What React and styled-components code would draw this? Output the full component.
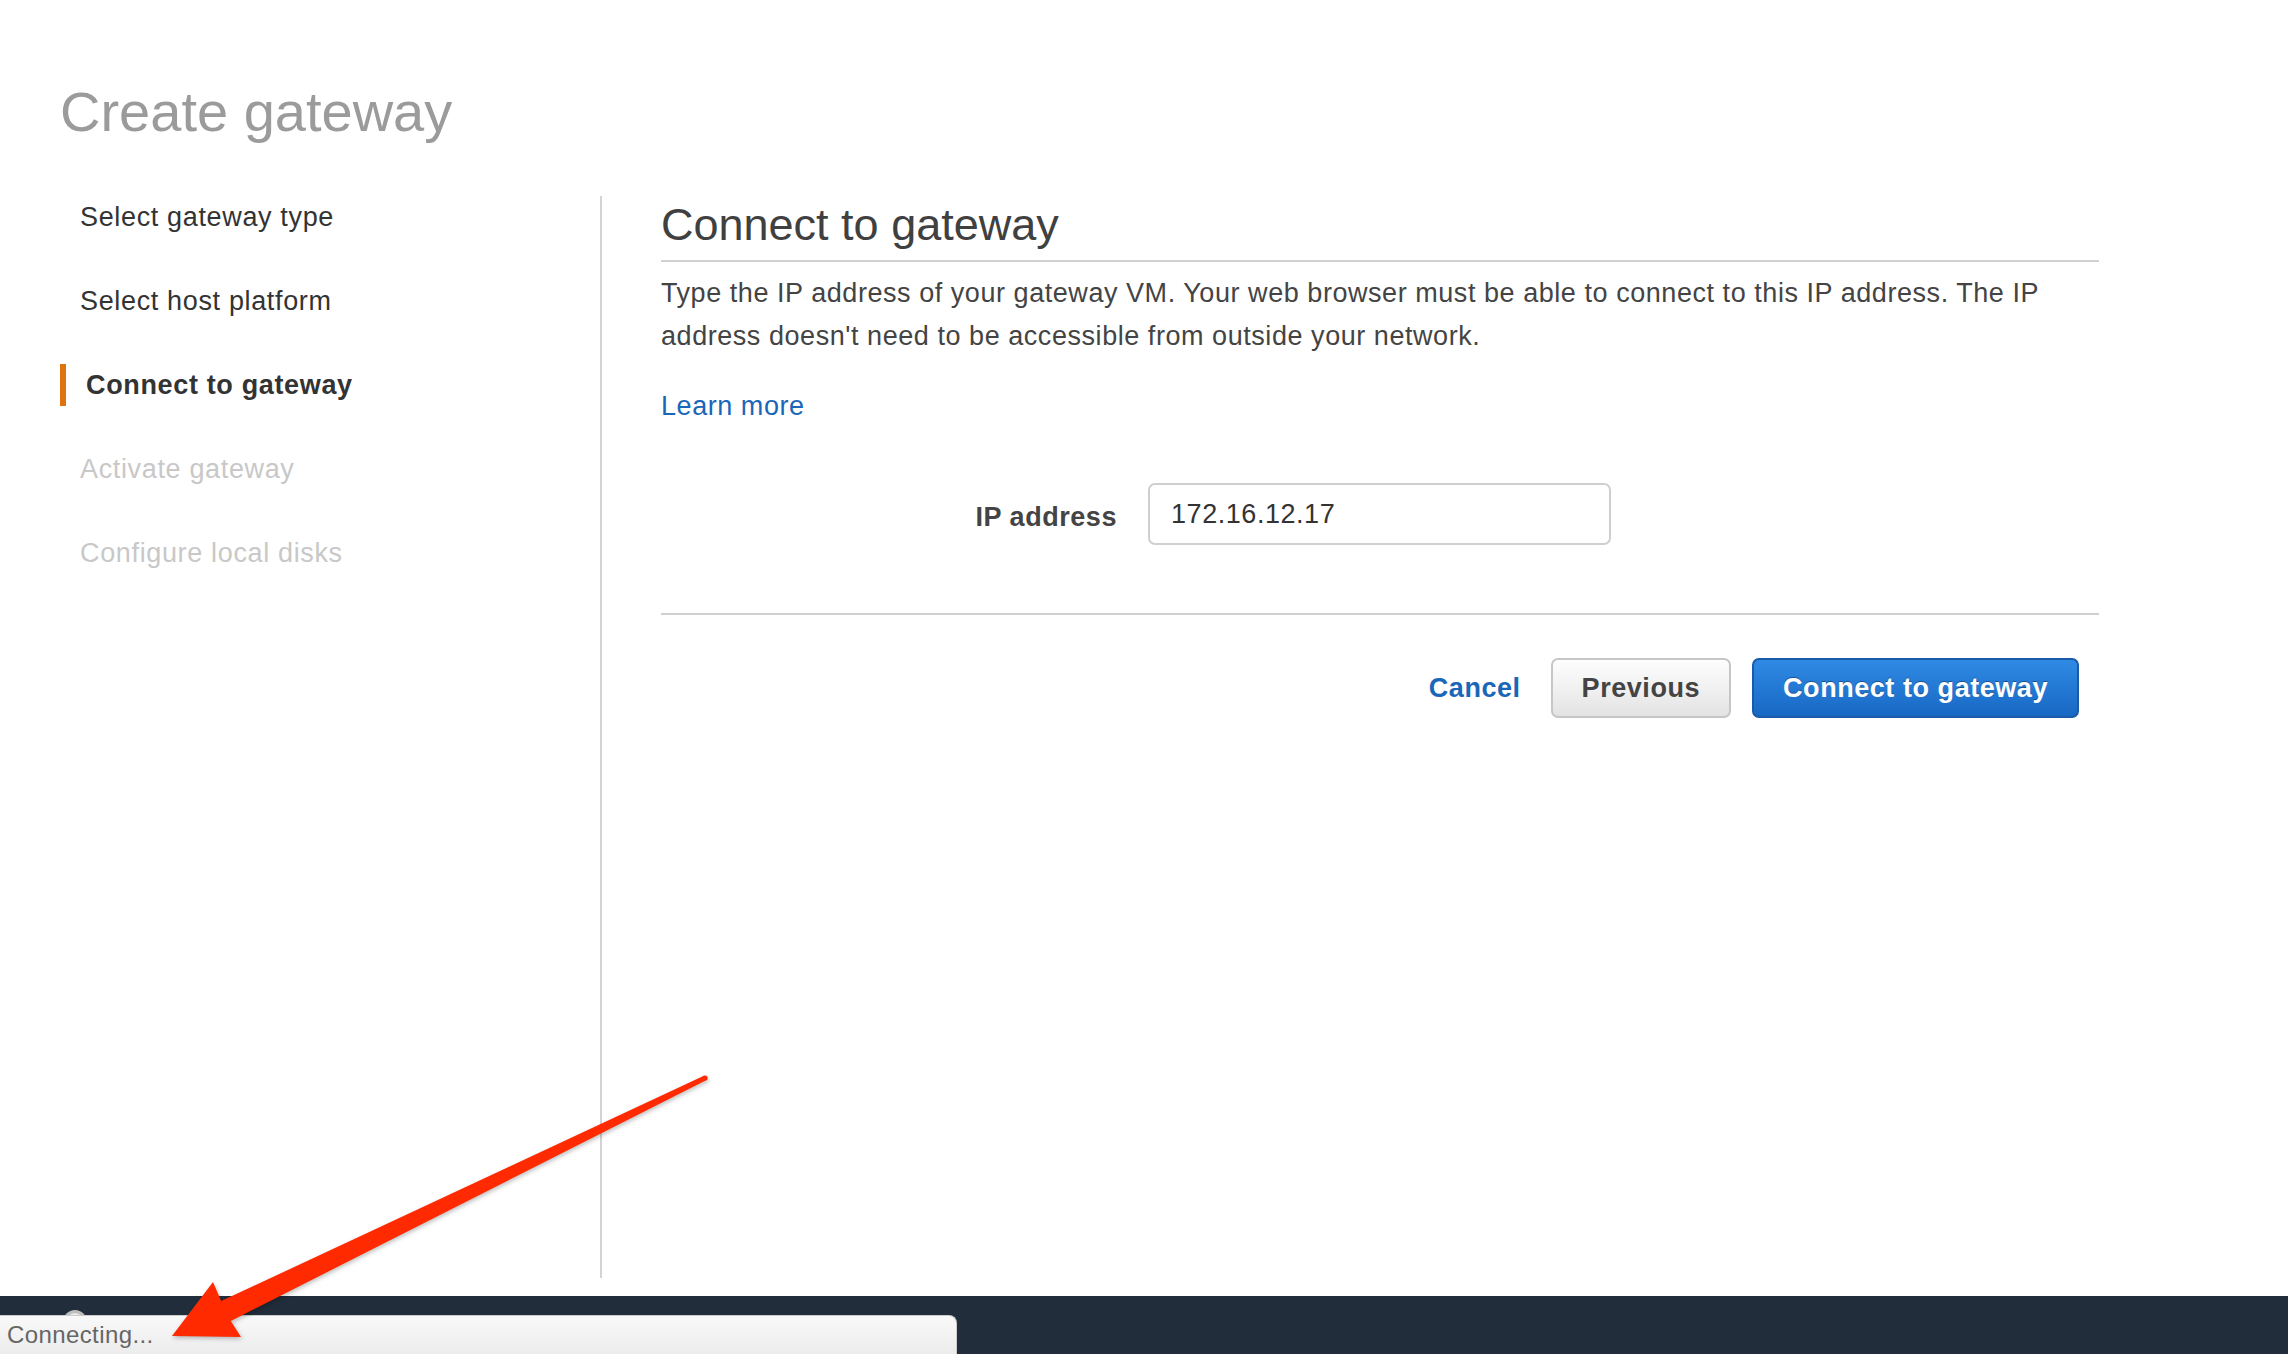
import React from "react";
import styled, { createGlobalStyle } from "styled-components";

const GlobalStyle = createGlobalStyle`
  html, body {
    margin: 0;
    padding: 0;
    background: #ffffff;
  }
  body {
    font-family: "Liberation Sans", Arial, Helvetica, sans-serif;
    font-size: 27px;
    letter-spacing: 0.55px;
    color: #444;
  }
  * {
    box-sizing: border-box;
  }
`;

const steps = [
  { label: "Select gateway type", state: "done" },
  { label: "Select host platform", state: "done" },
  { label: "Connect to gateway", state: "active" },
  { label: "Activate gateway", state: "todo" },
  { label: "Configure local disks", state: "todo" },
];

const Arrow = () => (
  <ArrowLayer viewBox="0 0 2288 1354" width="2288" height="1354">
    <polygon
      points="703.9,1075.8 221.2,1301.1 213,1282 172,1336 241,1337 230.8,1320.9 706.1,1080.2"
      fill="#ff2a00"
    />
    <circle cx="705" cy="1078" r="2.6" fill="#ff2a00" />
  </ArrowLayer>
);

const App = () => {
  return (
    <Page>
      <GlobalStyle />
      <Title>Create gateway</Title>

      <Body>
        <Sidebar>
          {steps.map((s) => (
            <Step key={s.label} $state={s.state}>
              {s.label}
            </Step>
          ))}
        </Sidebar>

        <Main>
          <Heading>Connect to gateway</Heading>
          <Description>
            Type the IP address of your gateway VM. Your web browser must be able to
            connect to this IP address. The IP address doesn't need to be accessible
            from outside your network.
          </Description>
          <LearnMore href="#">Learn more</LearnMore>

          <FieldRow>
            <FieldLabel>IP address</FieldLabel>
            <TextInput defaultValue="172.16.12.17" />
          </FieldRow>

          <Actions>
            <CancelLink href="#">Cancel</CancelLink>
            <Button>Previous</Button>
            <Button $primary>Connect to gateway</Button>
          </Actions>
        </Main>
      </Body>

      <Footer>
        <Spinner />
        <StatusBubble>Connecting...</StatusBubble>
      </Footer>

      <Arrow />
    </Page>
  );
};

export default App;

const Page = styled.div`
  position: relative;
  height: 100vh;
  display: flex;
  flex-direction: column;
  overflow: hidden;
`;

const Title = styled.h1`
  margin: 0;
  padding: 78px 0 0 60px;
  font-size: 56px;
  line-height: 67px;
  font-weight: normal;
  letter-spacing: 0;
  color: #9b9b9b;
`;

const Body = styled.div`
  flex: 1;
  display: flex;
  margin-top: 51px;
  padding: 0 0 18px 60px;
`;

const Sidebar = styled.nav`
  width: 542px;
  flex-shrink: 0;
  border-right: 2px solid #d3d3d3;
  display: flex;
  flex-direction: column;
  gap: 42px;
`;

const Step = styled.div`
  line-height: 42px;
  padding-left: 20px;
  letter-spacing: 0.65px;
  color: ${(p) => (p.$state === "todo" ? "#c8c8c8" : "#333")};
  font-weight: ${(p) => (p.$state === "active" ? "bold" : "normal")};
  border-left: ${(p) => (p.$state === "active" ? "6px solid #dd7410" : "none")};
`;

const Main = styled.main`
  flex: 1;
  padding: 2px 189px 0 59px;
`;

const Heading = styled.h2`
  margin: 0;
  font-size: 45px;
  line-height: 54px;
  font-weight: normal;
  letter-spacing: 0;
  color: #404040;
  padding-bottom: 8px;
  border-bottom: 2px solid #d0d0d0;
`;

const Description = styled.p`
  margin: 10px 0 0;
  line-height: 43px;
  color: #444;
`;

const LearnMore = styled.a`
  display: block;
  margin-top: 27px;
  line-height: 43px;
  color: #1a66b8;
  text-decoration: none;
`;

const FieldRow = styled.div`
  display: grid;
  grid-template-columns: 456px 463px;
  column-gap: 31px;
  align-items: center;
  margin-top: 55px;
  padding-bottom: 68px;
  border-bottom: 2px solid #d0d0d0;
`;

const FieldLabel = styled.label`
  text-align: right;
  font-weight: bold;
  color: #444;
  line-height: 43px;
  padding-top: 6px;
`;

const TextInput = styled.input`
  height: 62px;
  border: 2px solid #cfcfcf;
  border-radius: 7px;
  padding: 0 0 0 21px;
  font-family: inherit;
  font-size: 27px;
  letter-spacing: 0.55px;
  color: #333;
  outline: none;
`;

const Actions = styled.div`
  display: flex;
  justify-content: flex-end;
  align-items: center;
  gap: 21px;
  margin-top: 43px;
  padding-right: 20px;
`;

const CancelLink = styled.a`
  margin-right: 9px;
  font-weight: bold;
  color: #1a66b8;
  text-decoration: none;
`;

const Button = styled.button`
  height: 60px;
  padding: 0 29px;
  border-radius: 7px;
  font-family: inherit;
  font-size: 27px;
  font-weight: bold;
  letter-spacing: 0.55px;
  cursor: pointer;
  border: 2px solid ${(p) => (p.$primary ? "#1a5aa8" : "#c6c6c6")};
  color: ${(p) => (p.$primary ? "#fff" : "#444")};
  background: ${(p) =>
    p.$primary
      ? "linear-gradient(#2f8ae4, #1868c3)"
      : "linear-gradient(#fefefe, #e3e3e3)"};
  text-shadow: ${(p) => (p.$primary ? "0 -1px 0 rgba(0,0,0,0.35)" : "none")};
`;

const Footer = styled.footer`
  position: relative;
  height: 58px;
  flex-shrink: 0;
  background: #222d3b;
`;

const Spinner = styled.div`
  position: absolute;
  left: 63px;
  top: 14px;
  width: 24px;
  height: 24px;
  border-radius: 50%;
  background: #e9e9e9;
  border: 3px solid #bdbdbd;
`;

const StatusBubble = styled.div`
  position: absolute;
  left: 0;
  bottom: 0;
  width: 957px;
  height: 39px;
  padding-left: 7px;
  line-height: 38px;
  font-size: 24px;
  letter-spacing: 0.4px;
  color: #666;
  background: linear-gradient(#f9f9f9, #ececec);
  border-top: 1px solid #cdcdcd;
  border-right: 1px solid #cdcdcd;
  border-top-right-radius: 8px;
`;

const ArrowLayer = styled.svg`
  position: absolute;
  top: 0;
  left: 0;
  pointer-events: none;
  filter: drop-shadow(1px 2px 2px rgba(0, 0, 0, 0.25));
`;
